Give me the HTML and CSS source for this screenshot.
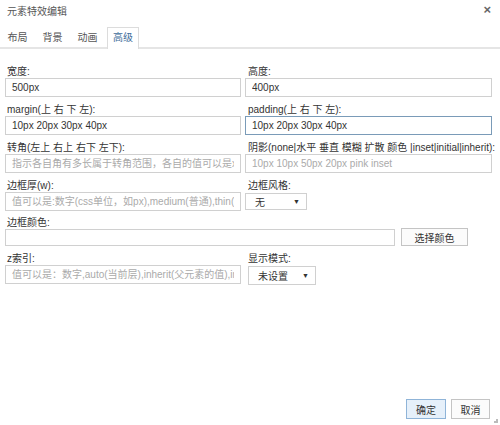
FILE: index.html
```html
<!DOCTYPE html>
<html lang="zh">
<head>
<meta charset="utf-8">
<title>元素特效编辑</title>
<link rel="stylesheet" href="styles.css">
</head>
<body>
<div class="dialog">
  <div class="titlebar">
    <span class="title">元素特效编辑</span>
    <span class="close">×</span>
  </div>
  <div class="tabs">
    <span class="tab">布局</span>
    <span class="tab">背景</span>
    <span class="tab">动画</span>
    <span class="tab active">高级</span>
  </div>
  <div class="form">
    <div class="field left">
      <div class="label">宽度:</div>
      <input class="input" type="text" value="500px">
    </div>
    <div class="field right">
      <div class="label">高度:</div>
      <input class="input" type="text" value="400px">
    </div>
    <div class="field left">
      <div class="label">margin(上 右 下 左):</div>
      <input class="input" type="text" value="10px 20px 30px 40px">
    </div>
    <div class="field right">
      <div class="label">padding(上 右 下 左):</div>
      <input class="input focus" type="text" value="10px 20px 30px 40px">
    </div>
    <div class="field left">
      <div class="label">转角(左上 右上 右下 左下):</div>
      <input class="input" type="text" placeholder="指示各自角有多长属于转角范围，各自的值可以是x%,或者px">
    </div>
    <div class="field right">
      <div class="label">阴影(none|水平 垂直 模糊 扩散 颜色 |inset|initial|inherit):</div>
      <input class="input" type="text" placeholder="10px 10px 50px 20px pink inset">
    </div>
    <div class="field left">
      <div class="label">边框厚(w):</div>
      <input class="input" type="text" placeholder="值可以是:数字(css单位，如px),medium(普通),thin(薄),thick(厚)">
    </div>
    <div class="field right">
      <div class="label">边框风格:</div>
      <div class="select s1"><span>无</span><span class="arrow">▼</span></div>
    </div>
    <div class="field full">
      <div class="label">边框颜色:</div>
      <div class="colorrow">
        <input class="input color" type="text">
        <button class="btn pick">选择颜色</button>
      </div>
    </div>
    <div class="field left">
      <div class="label">z索引:</div>
      <input class="input" type="text" placeholder="值可以是：数字,auto(当前层),inherit(父元素的值),initial">
    </div>
    <div class="field right">
      <div class="label">显示模式:</div>
      <div class="select s2"><span>未设置</span><span class="arrow">▼</span></div>
    </div>
  </div>
  <div class="footer">
    <button class="btn ok">确定</button>
    <button class="btn cancel">取消</button>
  </div>
  <div class="grip"></div>
</div>
</body>
</html>
```
FILE: styles.css
```css
html, body {
  margin: 0;
  padding: 0;
  background: #fff;
}
body {
  width: 500px;
  height: 425px;
  overflow: hidden;
  font-family: "Liberation Sans", "Noto Sans CJK SC", sans-serif;
  font-size: 10px;
  color: #333;
}
.dialog {
  position: relative;
  width: 500px;
  height: 425px;
  display: flex;
  flex-direction: column;
}
.titlebar {
  height: 20px;
  padding: 0 9px 0 7px;
  display: flex;
  justify-content: space-between;
  align-items: center;
  color: #555;
}
.close {
  font-size: 13px;
  font-weight: bold;
  color: #666;
  line-height: 12px;
}
.tabs {
  margin-top: 7px;
  padding-left: 2px;
  display: flex;
  border-bottom: 2px solid #e5e5e5;
  height: 20px;
}
.tab {
  box-sizing: border-box;
  width: 31px;
  text-align: center;
  line-height: 20px;
  margin-right: 4px;
  color: #555;
  border: 1px solid transparent;
  border-bottom: none;
}
.tab.active {
  border-color: #dcdcdc;
  background: #fff;
  color: #3e6c9a;
  width: 32px;
  height: 22px;
  margin-bottom: -2px;
}
.form {
  display: grid;
  grid-template-columns: 240px 250px;
  row-gap: 6px;
  padding: 16px 0 0 5px;
}
.field {
  display: flex;
  flex-direction: column;
}
.field.full {
  grid-column: 1 / 3;
}
.label {
  line-height: 13px;
  height: 13px;
  padding-left: 2px;
  white-space: nowrap;
  color: #333;
}
.full .label {
  line-height: 12px;
  height: 11px;
}
.right .label {
  padding-left: 3px;
}
.input {
  box-sizing: border-box;
  height: 19px;
  border: 1px solid #d0d0d0;
  padding: 0 6px;
  font-family: inherit;
  font-size: 10px;
  color: #333;
  outline: none;
  margin: 0;
}
.left .input {
  width: 236px;
}
.right .input {
  width: 247px;
}
.input.focus {
  border-color: #7a9bb8;
}
.input::placeholder {
  color: #aaa;
}
.select {
  box-sizing: border-box;
  height: 17px;
  border: 1px solid #d0d0d0;
  display: flex;
  justify-content: space-between;
  align-items: center;
  padding: 0 6px 0 9px;
  color: #333;
  margin-top: 1px;
}
.select.s1 {
  width: 62px;
}
.select.s2 {
  width: 68px;
  height: 19px;
  margin-left: 3px;
}
.arrow {
  font-size: 7px;
  color: #333;
}
.colorrow {
  display: flex;
  align-items: center;
  gap: 6px;
}
.input.color {
  width: 390px;
  height: 17px;
}
.btn {
  box-sizing: border-box;
  font-family: inherit;
  font-size: 10px;
  color: #333;
  background: #fbfbfb;
  border: 1px solid #c4c4c4;
  padding: 0;
  margin: 0;
}
.pick {
  width: 67px;
  height: 18px;
}
.footer {
  margin-top: auto;
  display: flex;
  justify-content: flex-end;
  gap: 5px;
  padding: 0 10px 6px 0;
}
.ok, .cancel {
  height: 20px;
  width: 40px;
}
.ok {
  background: #e6f0fa;
  border-color: #8fb4d8;
}
.cancel {
  width: 39px;
}
.grip {
  position: absolute;
  right: 2px;
  bottom: 2px;
  width: 4px;
  height: 4px;
  border-right: 2px solid #bbb;
  border-bottom: 2px solid #bbb;
  box-sizing: border-box;
}
```
